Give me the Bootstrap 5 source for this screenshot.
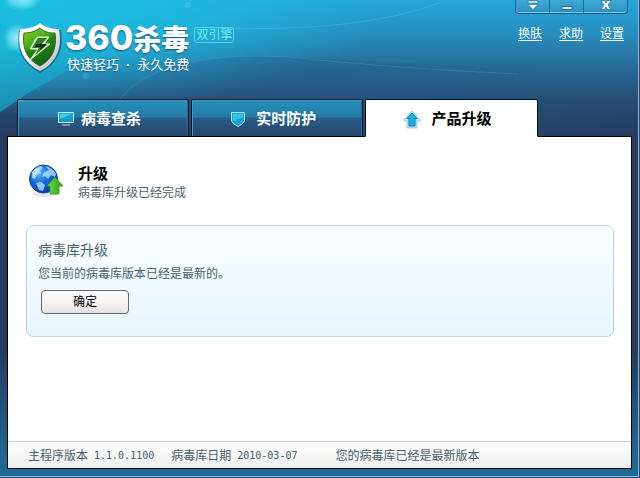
<!DOCTYPE html>
<html lang="zh-CN">
<head>
<meta charset="utf-8">
<meta name="viewport" content="width=device-width, initial-scale=1">
<title>360杀毒</title>
<link href="https://cdn.jsdelivr.net/npm/bootstrap@5.3.0/dist/css/bootstrap.min.css" rel="stylesheet">
<style>
body{font-family:"Liberation Sans","Noto Sans CJK SC",sans-serif;font-size:12px;line-height:16px;color:#48636f}
.shell{min-height:100vh;padding:0 7px 8px;background:linear-gradient(#25a7db 0,#278dbd 35px,#286591 72px,#27496f 105px,#263b5f 140px,#263b5f 350px,#22648f 450px,#1f6c96 100%);border-right:1px solid #27496f;border-bottom:1px solid #24507a;box-shadow:inset -1px -1px #8fb4d4;isolation:isolate}
.waves{z-index:-1;height:200px}
.topbar{height:99px;padding-right:4px}
.brand{padding:22px 0 0 11px}
.brand-row{height:35px}
.brand-mark{margin-right:3px}
.brand-name{margin:0;font-weight:900;font-size:28px;line-height:32px;color:#fff;text-shadow:0 1px 2px #174d78;white-space:nowrap}
.brand-name span{font:800 34px/32px Inter,"Liberation Sans",sans-serif}
.engine{font-size:12px;line-height:14px;color:#6eeafa;border:1px solid #50d4ee;border-radius:3px;padding:0 1px;margin:5px 0 0 5px;white-space:nowrap}
.slogan{margin:0;padding-left:2px;color:#fff;font-size:13px;line-height:16px;white-space:nowrap;text-shadow:0 1px 1px #1d5f8c}
.slogan i{font-style:normal;font-weight:700;padding:0 7px}
.winctl{height:14px;width:113px;border:1px solid #1d5b88;border-top:0;border-radius:0 0 4px 4px;background:linear-gradient(#3dabd7,#2e8fc0);box-shadow:inset 0 -1px #7cc8e6;overflow:hidden}
.winctl button{border:0;border-right:1px solid #246c9b;background:none;padding:0;width:34px;display:flex;justify-content:center}
.winctl button:last-child{border-right:0;width:43px}
.toplinks{gap:17px;margin-top:12px}
.toplinks a{color:#fff;text-decoration:underline;text-underline-offset:2px}
.tabs{gap:2px;padding-left:10px;margin-bottom:-1px;position:relative}
.tabs button{width:28%;height:38px;gap:6px;border:1px solid #061525;border-bottom-color:#000;border-radius:2px 2px 0 0;color:#fff;font-size:15px;line-height:20px;font-weight:700;background:linear-gradient(#2590b9 0,#267aa5 17px,#285c87 18px,#27466b 100%);box-shadow:inset 1px 1px #3c9dc2,inset -1px 0 #306991;padding:2px 8px 0 0}
.tabs button.active{background:#fff;color:#000;border-bottom-color:#fff;box-shadow:none}
.main-panel{background:#fff;border:1px solid #000}
.intro{padding:25px 20px 0;gap:14px}
.intro h1{font-size:15px;line-height:20px;font-weight:700;color:#000;margin:2px 0 1px}
.result{margin:24px 17px 0 18px;padding:14px 11px 22px;border:1px solid #bfd3df;border-radius:7px;background:linear-gradient(#fcfeff,#f2f9fe 45%,#e7f5fe)}
.result h2{font-size:14px;line-height:20px;font-weight:400;margin:0 0 6px}
.okbtn{width:88px;height:24px;margin:8px 3px 0;border:1px solid #66666c;border-radius:4px;background:linear-gradient(#fff,#f6f4f4 50%,#e7e3e3);color:#000;padding:0;font-size:12px}
.status{height:27px;padding:2px 20px 0;border-top:1px solid #c1d0d9;background:linear-gradient(#fff,#ededec);white-space:nowrap}
.status .num{font:10px/16px "DejaVu Sans Mono",monospace;margin-left:6px}
.status .gap-date{margin-left:17px}.status .gap-state{margin-left:38px}
</style>
<script src="https://cdn.jsdelivr.net/npm/bootstrap@5.3.0/dist/js/bootstrap.bundle.min.js" defer></script>
</head>
<body>
<div class="shell position-relative d-flex flex-column">
<svg class="waves position-absolute top-0 start-0 w-100" viewBox="0 0 640 200" preserveAspectRatio="none" aria-hidden="true">
<defs>
<radialGradient id="glow" gradientUnits="userSpaceOnUse" cx="0" cy="0" r="1" gradientTransform="translate(10 5) scale(380 110)"><stop offset="0" stop-color="#19d5f4"/><stop offset=".45" stop-color="#1cc3e8" stop-opacity=".75"/><stop offset="1" stop-color="#1cb5e0" stop-opacity="0"/></radialGradient>
<linearGradient id="ribbon" x1="0" y1="0" x2="1" y2="0"><stop offset="0" stop-color="#18b2d2" stop-opacity=".65"/><stop offset="1" stop-color="#1ba5cf" stop-opacity="0"/></linearGradient>
<linearGradient id="deep" x1="0" y1="0" x2="1" y2="0"><stop offset="0" stop-color="#245c88" stop-opacity=".1"/><stop offset=".4" stop-color="#245c88" stop-opacity=".4"/><stop offset="1" stop-color="#245c88" stop-opacity="0"/></linearGradient>
<radialGradient id="orb"><stop offset="0" stop-color="#b5f8ff" stop-opacity=".85"/><stop offset=".6" stop-color="#90eefa" stop-opacity=".5"/><stop offset="1" stop-color="#6be5f8" stop-opacity="0"/></radialGradient>
</defs>
<rect width="640" height="200" fill="url(#glow)"/>
<path d="M0 0H260Q110 35 0 112Z" fill="url(#ribbon)"/>
<path d="M120 99Q160 50 290 57T640 74V136H100Z" fill="url(#deep)"/>
<path d="M120 99Q160 50 290 57Q390 68 520 74" fill="none" stroke="#3b9dc9" stroke-opacity=".4"/>
<path d="M210 28Q360 33 440 3" fill="none" stroke="#55c5e8" stroke-opacity=".4"/>
<ellipse cx="22" cy="-2" rx="20" ry="13" fill="url(#orb)"/><ellipse cx="17" cy="38" rx="14" ry="15" fill="url(#orb)"/><circle cx="86" cy="76" r="3" fill="#7fcfe8" opacity=".25"/><circle cx="188" cy="5" r="3" fill="#76dcf2" opacity=".3"/>
</svg>
<header class="topbar d-flex justify-content-between flex-shrink-0">
<div class="brand d-flex align-items-start">
<svg class="brand-mark flex-shrink-0" width="44" height="51" viewBox="0 0 44 51" aria-hidden="true">
<defs><linearGradient id="rim" x1="0" y1="0" x2="1" y2="1"><stop offset=".4" stop-color="#fff"/><stop offset="1" stop-color="#a9b4b8"/></linearGradient><linearGradient id="green" x1="0" y1="0" x2=".5" y2="1"><stop stop-color="#8ed526"/><stop offset=".45" stop-color="#45a91a"/><stop offset=".55" stop-color="#238815"/><stop offset="1" stop-color="#126414"/></linearGradient></defs>
<path d="M22 2C17 6 9 8 1 8C-2 26 3 41 22 51C41 41 46 26 43 8C35 8 27 6 22 2Z" fill="#174666" opacity=".6"/>
<path d="M22 1C17 5 9 7 2 7C-1 25 4 40 22 49C40 40 44 25 41 7C34 7 27 5 22 1Z" fill="url(#rim)"/>
<path d="M22 6C17 10 11 11 6 11C4 25 8 37 22 44C35 37 39 25 37 11C31 11 26 10 22 6Z" fill="url(#green)" stroke="#396b1d"/>
<path d="M19 15H31L26 22H32L12 38L20 27H12Z" fill="#cdeebd" stroke="#e6fad8" stroke-width="1" stroke-linejoin="round"/><path d="M20 16H29L23 23H29L17 33L21 26H14Z" fill="#2c7a22"/><path d="M18 22H29L21 29L23 25H17Z" fill="#0d2c18"/>
</svg>
<div><div class="brand-row d-flex align-items-start"><p class="brand-name"><span>360</span>杀毒</p><span class="engine">双引擎</span></div><p class="slogan">快速轻巧<i>·</i>永久免费</p></div>
</div>
<div class="d-flex flex-column align-items-end">
<div class="winctl d-flex">
<button type="button" aria-label="菜单"><svg width="12" height="11" viewBox="0 0 12 11"><path d="M1 1H11V3H1ZM1 4.500H11L6 9.500Z" fill="#fff" stroke="#28658a" stroke-width=".6"/></svg></button>
<button type="button" aria-label="最小化"><svg width="12" height="11" viewBox="0 0 12 11"><path d="M1 6.500H11V9.500H1Z" fill="#e8faff" stroke="#28658a"/></svg></button>
<button type="button" aria-label="关闭"><svg width="12" height="11" viewBox="0 0 12 11"><path d="M1 .5H4.500L6 3L7.500 .5H11L8 5L11 9.500H7.500L6 7L4.500 9.500H1L4 5Z" fill="#fff" stroke="#28658a" stroke-width=".7"/></svg></button>
</div>
<nav class="toplinks d-flex pe-1"><a href="#">换肤</a><a href="#">求助</a><a href="#">设置</a></nav>
</div>
</header>
<div class="tabs d-flex flex-shrink-0" role="tablist">
<button type="button" role="tab" aria-selected="false" class="d-flex align-items-center justify-content-center"><svg width="18" height="16" viewBox="0 0 18 16"><rect x="1.500" y="1.500" width="15" height="10" fill="#139ed0" stroke="#c2f1fc"/><path d="M3 3H15L3 8Z" fill="#42cdec"/><path d="M5 14H13" stroke="#a5a8ab" stroke-width="1.500"/></svg>病毒查杀</button>
<button type="button" role="tab" aria-selected="false" class="d-flex align-items-center justify-content-center"><svg class="me-1" width="16" height="17" viewBox="0 0 16 17"><path d="M1.500 1.500H14.500V10Q13 13 8 15.500Q3 13 1.500 10Z" fill="#18a4d2" stroke="#a4e9fb"/><path d="M3 3H13V6L3 10Z" fill="#38c6e8"/></svg>实时防护</button>
<button type="button" role="tab" aria-selected="true" class="active d-flex align-items-center justify-content-center"><svg class="me-1" width="18" height="19" viewBox="0 0 18 19"><path d="M9 1L17 9V11H14V18H4V11H1V9Z" fill="#b9dfed" stroke="#a4d3e4"/><path d="M9 3L14 8.500H12V16H6V8.500H4Z" fill="#16b5df" stroke="#187fa8"/></svg>产品升级</button>
</div>
<main class="main-panel d-flex flex-column flex-grow-1">
<section class="intro d-flex align-items-start">
<svg width="36" height="38" viewBox="0 0 36 38" aria-hidden="true">
<defs><radialGradient id="sea" cx=".35" cy=".3" r=".75"><stop stop-color="#4eb4fa"/><stop offset=".5" stop-color="#1768dc"/><stop offset="1" stop-color="#0735a8"/></radialGradient><linearGradient id="leaf" x1="0" x2="1"><stop stop-color="#70dc45"/><stop offset="1" stop-color="#24a51a"/></linearGradient></defs>
<ellipse cx="16" cy="32" rx="12" ry="3" fill="#bdccd9" opacity=".5"/>
<circle cx="15.500" cy="17" r="14" fill="url(#sea)" stroke="#1545a5"/>
<path d="M4 11Q7 5 13 4L15 6L12 9L13 11L9 13L7 17L4 16ZM17 4Q24 5 28 12L27 15L23 13L20 17L17 14L14 15L16 10L21 8ZM8 21L13 20L17 23L15 29L11 28Z" fill="#b0e2fb" opacity=".8"/>
<path d="M4 10Q8 6 12 6L9 11L6 15Z" fill="#fff" opacity=".4"/>
<path d="M27 15L35 24H31V32H22V24H19Z" fill="url(#leaf)" stroke="#2c9a22" stroke-width=".8"/>
</svg>
<div><h1>升级</h1><div>病毒库升级已经完成</div></div>
</section>
<section class="result">
<h2>病毒库升级</h2>
<div>您当前的病毒库版本已经是最新的。</div>
<button type="button" class="okbtn">确定</button>
</section>
<footer class="status mt-auto d-flex align-items-center"><span>主程序版本</span><span class="num">1.1.0.1100</span><span class="gap-date">病毒库日期</span><span class="num">2010-03-07</span><span class="gap-state">您的病毒库已经是最新版本</span></footer>
</main>
</div>
</body>
</html>
